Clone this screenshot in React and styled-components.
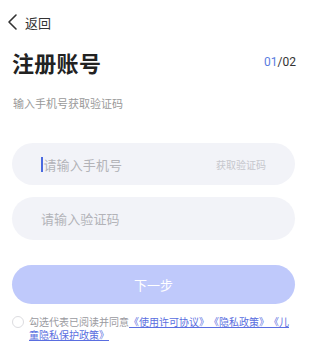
import React from "react";
import styled, { createGlobalStyle } from "styled-components";

const Global = createGlobalStyle`
  html, body { margin: 0; padding: 0; background: #fff; }
  body { font-family: "Noto Sans CJK SC", "Noto Sans", sans-serif; -webkit-font-smoothing: antialiased; }
  * { box-sizing: border-box; }
`;

const Page = styled.div`
  width: 307px;
  height: 358px;
  padding: 0 12px;
  display: flex;
  flex-direction: column;
  background: #fff;
  overflow: hidden;
`;

const NavBar = styled.div`
  height: 44px;
  display: flex;
  align-items: center;
  gap: 5px;
  margin-left: -6px;
  color: #333;
  font-size: 13px;
`;

const TitleRow = styled.div`
  display: flex;
  align-items: center;
  justify-content: space-between;
  height: 36px;
`;

const Title = styled.h1`
  margin: 0;
  font-size: 22px;
  font-weight: 700;
  color: #222;
  letter-spacing: 0.3px;
`;

const Step = styled.div`
  font-family: "Roboto", "Noto Sans", sans-serif;
  font-size: 12px;
  color: #333;
  margin-right: -1px;
`;

const StepCurrent = styled.span`
  color: #5b7ce0;
`;

const Subtitle = styled.p`
  margin: 15px 0 0 1px;
  font-size: 11px;
  line-height: 16px;
  color: #999;
`;

const Field = styled.div`
  height: ${(p) => p.$h}px;
  margin-top: ${(p) => p.$mt}px;
  border-radius: 22px;
  background: #f2f3f8;
  display: flex;
  align-items: center;
  padding: 0 29px 0 29px;
`;

const Placeholder = styled.div`
  flex: 1;
  display: flex;
  align-items: center;
  font-size: 13px;
  color: #b3b3b8;
  letter-spacing: 0.1px;
`;

const Caret = styled.span`
  display: inline-block;
  width: 1.5px;
  height: 15px;
  background: #4a6ae0;
  margin-right: 1px;
`;

const CodeLink = styled.span`
  font-size: 10px;
  color: #c6c7cd;
`;

const NextButton = styled.button`
  margin-top: 25px;
  height: 39px;
  border: 0;
  border-radius: 20px;
  background: #bfc9fb;
  color: #fff;
  font-family: inherit;
  font-size: 13px;
  padding: 0;
`;

const Agreement = styled.div`
  margin-top: 11px;
  display: flex;
  align-items: flex-start;
  gap: 5px;
`;

const Radio = styled.span`
  flex: none;
  width: 12px;
  height: 12px;
  margin-top: 1px;
  border: 1px solid #dcdce0;
  border-radius: 50%;
`;

const AgreeText = styled.div`
  font-size: 10px;
  line-height: 13px;
  color: #9a9aa0;
  text-spacing-trim: space-all;
  font-feature-settings: "halt" 0, "chws" 0;
`;

const DocLink = styled.a`
  color: #5a6ee0;
  text-decoration: underline;
`;

function Chevron() {
  return (
    <svg width="14" height="18" viewBox="0 0 14 18" fill="none">
      <path d="M10 2L3 9l7 7" stroke="#333" strokeWidth="1.6" strokeLinecap="round" strokeLinejoin="round" />
    </svg>
  );
}

export default function App() {
  return (
    <>
      <Global />
      <Page>
        <NavBar>
          <Chevron />
          <span>返回</span>
        </NavBar>
        <TitleRow>
          <Title>注册账号</Title>
          <Step>
            <StepCurrent>01</StepCurrent>/02
          </Step>
        </TitleRow>
        <Subtitle>输入手机号获取验证码</Subtitle>
        <Field $h={42} $mt={32}>
          <Placeholder>
            <Caret />
            请输入手机号
          </Placeholder>
          <CodeLink>获取验证码</CodeLink>
        </Field>
        <Field $h={43} $mt={12}>
          <Placeholder>请输入验证码</Placeholder>
        </Field>
        <NextButton>下一步</NextButton>
        <Agreement>
          <Radio />
          <AgreeText>
            勾选代表已阅读并同意
            <DocLink>《使用许可协议》《隐私政策》《儿童隐私保护政策》</DocLink>
          </AgreeText>
        </Agreement>
      </Page>
    </>
  );
}
